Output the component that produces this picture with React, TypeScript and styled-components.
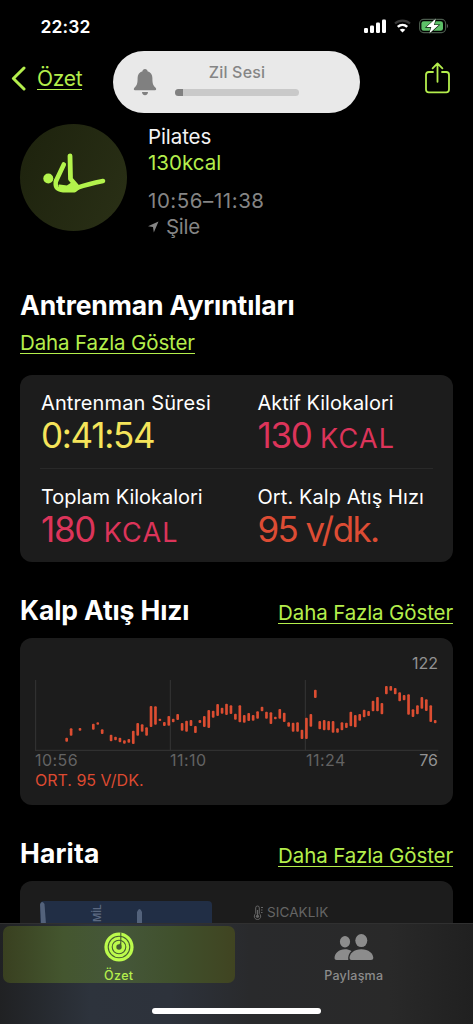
import React from "react";
import styled, { createGlobalStyle } from "styled-components";

const LIME = "#b4ee4c";
const RED = "#dc345a";
const CARD = "#1c1c1c";

const Global = createGlobalStyle`
  * { box-sizing: border-box; }
  html, body { margin: 0; padding: 0; background: #000; }
  body { font-family: Inter, "Liberation Sans", sans-serif; color: #fff; }
  svg { display: block; flex: none; }
`;

const Screen = styled.div`
  position: relative;
  display: flex;
  flex-direction: column;
  width: 473px;
  height: 1024px;
  overflow: hidden;
  background: #000;
`;

const StatusBar = styled.div`
  display: flex;
  justify-content: space-between;
  align-items: center;
  height: 52px;
  padding: 0 24px 0 40.5px;
  flex: none;
`;

const Clock = styled.span`
  font-size: 17.5px;
  font-weight: 600;
  letter-spacing: 0.1px;
`;

const StatusIcons = styled.div`
  display: flex;
  align-items: center;
  gap: 8px;
`;

const NavBar = styled.nav`
  display: flex;
  justify-content: space-between;
  align-items: center;
  height: 52px;
  padding: 0 23px 0 11px;
  flex: none;
`;

const BackLink = styled.a`
  display: flex;
  align-items: center;
  gap: 11px;
  color: ${LIME};
`;

const Underlined = styled.span<{ $size?: number; $track?: number }>`
  display: inline-block;
  font-size: ${(p) => p.$size ?? 20.5}px;
  line-height: 24px;
  height: 23px;
  letter-spacing: ${(p) => p.$track ?? -0.12}px;
  color: ${LIME};
  border-bottom: 1.3px solid ${LIME};
  white-space: nowrap;
`;

const VolumeHud = styled.div`
  position: absolute;
  top: 51px;
  left: 113px;
  width: 247px;
  height: 62px;
  border-radius: 31px;
  background: #e9e9e9;
  display: flex;
  padding: 18px 0 0 20px;
  gap: 18px;
`;

const HudBody = styled.div`
  display: flex;
  flex-direction: column;
  align-items: center;
  width: 124px;
  margin-top: -6px;
`;

const HudTitle = styled.span`
  font-size: 16px;
  font-weight: 500;
  line-height: 18px;
  color: #858585;
  letter-spacing: 0.2px;
`;

const HudTrack = styled.div`
  width: 124px;
  height: 7px;
  margin-top: 8px;
  border-radius: 4px;
  background: #c9c9c9;
  overflow: hidden;
`;

const HudLevel = styled.div`
  width: 8px;
  height: 7px;
  background: #818181;
`;

const Content = styled.main`
  flex: 1;
  min-height: 0;
  overflow: hidden;
  padding: 0 20px;
`;

const Summary = styled.section`
  display: flex;
  gap: 21px;
  padding-top: 20px;
  height: 177px;
`;

const Badge = styled.div`
  width: 107px;
  height: 107px;
  border-radius: 50%;
  background: linear-gradient(115deg, #1d220d, #2a3016);
`;

const SummaryText = styled.div`
  display: flex;
  flex-direction: column;
`;

const SummaryLine = styled.div<{ $color: string; $gap?: number; $track?: number }>`
  display: flex;
  align-items: center;
  font-size: 20.5px;
  line-height: 26px;
  height: 26px;
  margin-top: ${(p) => p.$gap ?? 0}px;
  color: ${(p) => p.$color};
  letter-spacing: ${(p) => p.$track ?? -0.3}px;
`;

const Heading = styled.h2<{ $track?: number }>`
  margin: 0;
  font-size: 26.5px;
  font-weight: 700;
  line-height: 32px;
  letter-spacing: ${(p) => p.$track ?? -0.12}px;
  white-space: nowrap;
`;

const DetailsHead = styled.header`
  display: flex;
  flex-direction: column;
  align-items: flex-start;
  gap: 10px;
  height: 94px;
  padding-top: 7.5px;
`;

const SectionHead = styled.header`
  display: flex;
  justify-content: space-between;
  align-items: flex-start;
  height: 76px;
  padding-top: 31.5px;
`;

const HeadLink = styled.div`
  padding-top: 7.5px;
`;

const Card = styled.section<{ $height: number }>`
  height: ${(p) => p.$height}px;
  border-radius: 12px;
  background: ${CARD};
`;

const MetricsCard = styled(Card)`
  padding: 0 20px;
`;

const MetricRow = styled.div<{ $divided?: boolean }>`
  display: grid;
  grid-template-columns: 216.5px 1fr;
  height: 94px;
  padding: 15px 0 0 1px;
  border-bottom: ${(p) => (p.$divided ? "1px solid #292929" : "0")};
`;

const MetricLabel = styled.div<{ $track: number }>`
  font-size: 20px;
  line-height: 26px;
  letter-spacing: ${(p) => p.$track}px;
  white-space: nowrap;
`;

const MetricValue = styled.div<{ $color: string; $track: number }>`
  font-size: 35px;
  font-weight: 400;
  line-height: 38px;
  color: ${(p) => p.$color};
  letter-spacing: ${(p) => p.$track}px;
  white-space: nowrap;
`;

const Unit = styled.span`
  font-size: 27px;
  letter-spacing: 1.2px;
`;

const HeartCard = styled(Card)`
  padding: 15px 15px 0;
`;

const ChartMax = styled.div`
  height: 27px;
  font-size: 16px;
  line-height: 21px;
  text-align: right;
  color: #929292;
`;

const Axis = styled.div`
  display: grid;
  grid-template-columns: 135px 136px 1fr auto;
  height: 19px;
  font-size: 16px;
  line-height: 18px;
  letter-spacing: 0.45px;
  color: #636363;
`;

const AxisMin = styled.span`
  color: #929292;
  letter-spacing: 0;
`;

const Average = styled.div`
  font-size: 16px;
  line-height: 21px;
  color: #dd4a31;
`;

const MapCard = styled(Card)`
  display: flex;
  gap: 41px;
  padding: 20px 20px 0;
`;

const MapPreview = styled.div`
  width: 172px;
  height: 90px;
  border-radius: 4px;
  background: #212e45;
  overflow: hidden;
`;

const Weather = styled.div`
  display: flex;
  gap: 3px;
  height: 22px;
  align-items: center;
  font-size: 13.5px;
  letter-spacing: 0.1px;
  color: #656565;
`;

const TabBar = styled.footer`
  position: relative;
  flex: none;
  display: flex;
  height: 101px;
  padding: 2px 0 0 3px;
  border-top: 1px solid #303030;
  background: linear-gradient(90deg, #202123 0, #2d333c 90px, #2d323b 170px, #292a2c 250px, #292929 390px, #202020 473px);
`;

const Tab = styled.div<{ $active?: boolean }>`
  display: flex;
  flex-direction: column;
  align-items: center;
  width: ${(p) => (p.$active ? 232 : 239)}px;
  height: 57px;
  border-radius: 7px;
  color: ${(p) => (p.$active ? LIME : "#8c8c8c")};
  background: ${(p) =>
    p.$active ? "linear-gradient(90deg, #394020, #44562f 26%, #45573a 50%, #40502c 75%, #404421)" : "none"};
`;

const TabIcon = styled.div`
  display: flex;
  flex: none;
  align-items: flex-end;
  height: 36px;
  margin-bottom: 6px;
`;

const TabLabel = styled.span<{ $track: number }>`
  font-size: 12.5px;
  font-weight: 500;
  line-height: 15px;
  letter-spacing: ${(p) => p.$track}px;
`;

const HomeIndicator = styled.div`
  position: absolute;
  left: 152px;
  top: 84px;
  width: 169px;
  height: 6px;
  border-radius: 3px;
  background: #fff;
`;

/* One entry per interval: slot, top and bottom of the pulse range. */
const PULSE: [number, number, number][] = [
  [0, 173, 185], [1, 145, 167], [3, 144, 152], [6, 131, 149], [7, 127, 134], [8, 148, 162],
  [10, 164, 184], [11, 170, 181], [12, 173, 187], [13, 181, 191], [14, 177, 188], [15, 152, 192],
  [16, 129, 167], [17, 133, 155], [18, 142, 167], [19, 78, 141], [20, 79, 134], [21, 116, 123],
  [22, 126, 138], [23, 108, 137], [24, 116, 127], [25, 102, 120], [26, 129, 152], [27, 122, 155],
  [28, 120, 138], [29, 138, 159], [30, 120, 129], [31, 108, 141], [32, 90, 144], [33, 92, 113],
  [34, 72, 108], [35, 83, 101], [36, 71, 105], [37, 76, 102], [38, 101, 119], [39, 76, 127],
  [40, 105, 128], [41, 99, 123], [42, 105, 122], [43, 94, 116], [44, 80, 94], [45, 95, 116],
  [46, 97, 132], [47, 110, 118], [48, 87, 116], [49, 98, 126], [50, 127, 140], [51, 128, 155],
  [52, 127, 155], [53, 149, 177], [54, 113, 177], [55, 102, 140], [56, 29, 54], [57, 123, 148],
  [58, 120, 151], [59, 123, 151], [60, 123, 158], [61, 145, 158], [62, 127, 151], [63, 128, 144],
  [64, 95, 139], [65, 105, 142], [66, 102, 122], [67, 89, 112], [68, 93, 108], [69, 62, 94],
  [70, 51, 94], [71, 69, 103], [72, 18, 43], [73, 18, 32], [74, 24, 43], [75, 37, 64],
  [76, 45, 61], [77, 43, 104], [78, 88, 111], [79, 76, 103], [80, 51, 86], [81, 58, 93],
  [82, 76, 126], [83, 120, 130],
];

const PulseChart = () => (
  <svg width="405" height="71" viewBox="0 0 1215 213">
    <g stroke="#353535" strokeWidth="3">
      <path d="M2 0V211M406 0V211M811 0V211" />
      <path d="M0 211H1210" />
    </g>
    {PULSE.map(([slot, top, bottom]) => (
      <rect key={slot} x={91 + slot * 13.32} y={top} width="8" height={bottom - top} rx="3" fill="#dc4d31" />
    ))}
  </svg>
);

const SignalIcon = () => (
  <svg width="22" height="14" viewBox="0 0 22 14" fill="#fff">
    <rect x="0" y="9" width="4" height="5" rx="1.2" />
    <rect x="6" y="6.5" width="4" height="7.5" rx="1.2" />
    <rect x="12" y="3.5" width="4" height="10.5" rx="1.2" />
    <rect x="18" y="0.5" width="4" height="13.5" rx="1.2" />
  </svg>
);

const WifiIcon = () => (
  <svg width="17" height="14" viewBox="0 0 17 14" fill="none">
    <path d="M1 4.5C5.2 .6 11.8 .6 16 4.5" stroke="#383838" strokeWidth="2.2" />
    <path d="M3.8 7.9C6.5 5.3 10.5 5.3 13.2 7.9" stroke="#fff" strokeWidth="2.5" />
    <path d="M8.5 13.6 5.7 10.8C7.2 9.3 9.8 9.3 11.3 10.8Z" fill="#fff" />
  </svg>
);

const BatteryIcon = () => (
  <svg width="30" height="16" viewBox="0 0 30 16">
    <rect x=".6" y="1.4" width="26" height="13.2" rx="4" fill="none" stroke="#4b5b4d" strokeWidth="1.1" />
    <rect x="2.4" y="3.2" width="21.6" height="9.6" rx="2.3" fill="#5dc168" />
    <path d="M27.9 5.7v4.5c1.4-.8 1.4-3.7 0-4.5Z" fill="#666" />
    <path d="M16.8 .6 7.4 9.1H12.3L10.3 15.6 19.8 7H15Z" fill="#fff" stroke="#0b1a0d" strokeWidth="1.2" paintOrder="stroke" />
  </svg>
);

const BackIcon = () => (
  <svg width="15" height="25" viewBox="0 0 15 25">
    <path d="M13 2 2.4 12.5 13 23" fill="none" stroke={LIME} strokeWidth="3" strokeLinecap="round" strokeLinejoin="round" />
  </svg>
);

const ShareIcon = () => (
  <svg width="25" height="32" viewBox="0 0 25 32" fill="none" stroke={LIME} strokeWidth="1.8" strokeLinecap="round" strokeLinejoin="round">
    <path d="M8 10H3.8Q1 10 1 12.8V27.5Q1 30.3 3.8 30.3H21.2Q24 30.3 24 27.5V12.8Q24 10 21.2 10H17M12.5 19.8V1.6M7.6 6.4 12.5 1.4 17.4 6.4" />
  </svg>
);

const BellIcon = () => (
  <svg width="24" height="27" viewBox="0 0 24 27" fill="#808080">
    <path d="M12 0C10.5 0 9.5 1 9.5 2.2C6.2 3.2 4.6 5.6 4.6 9C4.6 14.5 4 16.3 1.6 18.5C.3 19.8 .7 21.3 2 21.3H22C23.3 21.3 23.7 19.8 22.4 18.5C20 16.3 19.4 14.5 19.4 9C19.4 5.6 17.8 3.2 14.5 2.2C14.5 1 13.5 0 12 0Z" />
    <path d="M9 23H15C15 25 13.8 26.2 12 26.2S9 25 9 23Z" />
  </svg>
);

const PilatesIcon = () => (
  <svg width="107" height="107" viewBox="0 0 107 107" fill="none" stroke="#b3f34c" strokeLinecap="round" strokeLinejoin="round">
    <circle cx="28.3" cy="54.5" r="5" fill="#b3f34c" stroke="none" />
    <path d="M43.8 40.5 36 57" strokeWidth="4.6" />
    <path d="M50 31.8 50.5 55 57 62.5" strokeWidth="4.8" />
    <path d="M36 57C34.6 63 37 66 43 66.2H54.5L58 63.5" strokeWidth="4.4" />
    <path d="M39.5 61.5 47 62.5 51.5 59.5 57 63 54 66.5H41Z" fill="#b3f34c" strokeWidth="2" />
    <path d="M57.5 63.7Q68 60 83 57" strokeWidth="4.6" />
  </svg>
);

const LocationIcon = () => (
  <svg width="18" height="12" viewBox="0 0 18 12">
    <path d="M10.5 .5 0 5.3 5 6 5.8 11.5Z" fill="#858585" />
  </svg>
);

const ThermometerIcon = () => (
  <svg width="11" height="15" viewBox="0 0 11 15" fill="none" stroke="#656565">
    <path d="M2.7 8.7V2.8A1.8 1.8 0 0 1 6.3 2.8V8.7A3.2 3.2 0 1 1 2.7 8.7Z" />
    <path d="M4.5 5V11" strokeWidth="1.3" />
    <circle cx="4.5" cy="11.3" r="1.6" fill="#656565" stroke="none" />
    <path d="M8 2.5H10M8 5H9.5M8 7.5H9.5" />
  </svg>
);

const MapArt = () => (
  <svg width="172" height="30" viewBox="0 0 172 30">
    <path d="M0 3Q2-1 4.5 3L6.5 30H1.5Z" fill="#53627b" />
    <path d="M97 11Q99.5 5 102 11V30H97Z" fill="#53627b" />
    <text transform="translate(61 21) rotate(-90)" fontSize="10" fontWeight="600" fill="#5b6880">MİL</text>
  </svg>
);

const RingsIcon = () => (
  <svg width="30" height="30" viewBox="0 0 30 30" fill="none">
    <circle cx="15" cy="15" r="14.6" fill="#bcfb4c" />
    <g stroke="#465d32" strokeWidth="1.1">
      <circle cx="15" cy="15" r="10.8" />
      <circle cx="15" cy="15" r="6.8" />
      <path d="M16.8 .5V14" />
    </g>
    <circle cx="15" cy="15" r="2.7" fill="#465d32" />
    <path d="M15 12.3 17 10.5V14Z" fill="#465d32" />
  </svg>
);

const PeopleIcon = () => (
  <svg width="40" height="28" viewBox="0 0 40 28" fill="#8c8c8c">
    <ellipse cx="11" cy="7.8" rx="5.1" ry="5.7" />
    <path d="M17.5 17C15.5 15.7 13.5 15.2 11 15.2C4.8 15.2 .5 19.5 .5 24.2Q.5 26 2.5 26H14.3C13.7 22.5 15 19 17.5 17Z" />
    <ellipse cx="27.3" cy="6.6" rx="6" ry="6.5" />
    <path d="M27.3 15.2C20 15.2 15.5 19.5 15.5 24Q15.5 26 17.5 26H37Q39.3 26 39.3 24C39.3 19.5 34.6 15.2 27.3 15.2Z" />
  </svg>
);

export default function App() {
  return (
    <Screen>
      <Global />
      <StatusBar>
        <Clock>22:32</Clock>
        <StatusIcons>
          <SignalIcon />
          <WifiIcon />
          <BatteryIcon />
        </StatusIcons>
      </StatusBar>
      <NavBar>
        <BackLink>
          <BackIcon />
          <Underlined $size={21} $track={-0.3}>Özet</Underlined>
        </BackLink>
        <ShareIcon />
      </NavBar>
      <VolumeHud>
        <BellIcon />
        <HudBody>
          <HudTitle>Zil Sesi</HudTitle>
          <HudTrack><HudLevel /></HudTrack>
        </HudBody>
      </VolumeHud>

      <Content>
        <Summary>
          <Badge><PilatesIcon /></Badge>
          <SummaryText>
            <SummaryLine $color="#f4f4f4" $track={-0.1}>Pilates</SummaryLine>
            <SummaryLine $color={LIME} $track={0}>130kcal</SummaryLine>
            <SummaryLine $color="#858585" $gap={12} $track={0.55}>10:56–11:38</SummaryLine>
            <SummaryLine $color="#858585"><LocationIcon />Şile</SummaryLine>
          </SummaryText>
        </Summary>

        <DetailsHead>
          <Heading>Antrenman Ayrıntıları</Heading>
          <Underlined>Daha Fazla Göster</Underlined>
        </DetailsHead>
        <MetricsCard $height={187}>
          <MetricRow $divided>
            <div>
              <MetricLabel $track={0.12}>Antrenman Süresi</MetricLabel>
              <MetricValue $color="#f5e45a" $track={-1.3}>0:41:54</MetricValue>
            </div>
            <div>
              <MetricLabel $track={-0.02}>Aktif Kilokalori</MetricLabel>
              <MetricValue $color={RED} $track={-1.3}>130 <Unit>KCAL</Unit></MetricValue>
            </div>
          </MetricRow>
          <MetricRow>
            <div>
              <MetricLabel $track={-0.02}>Toplam Kilokalori</MetricLabel>
              <MetricValue $color={RED} $track={-1.3}>180 <Unit>KCAL</Unit></MetricValue>
            </div>
            <div>
              <MetricLabel $track={0.08}>Ort. Kalp Atış Hızı</MetricLabel>
              <MetricValue $color="#dd4c34" $track={-1.6}>95 v/dk.</MetricValue>
            </div>
          </MetricRow>
        </MetricsCard>

        <SectionHead>
          <Heading>Kalp Atış Hızı</Heading>
          <HeadLink><Underlined>Daha Fazla Göster</Underlined></HeadLink>
        </SectionHead>
        <HeartCard $height={167}>
          <ChartMax>122</ChartMax>
          <PulseChart />
          <Axis>
            <span>10:56</span>
            <span>11:10</span>
            <span>11:24</span>
            <AxisMin>76</AxisMin>
          </Axis>
          <Average>ORT. 95 V/DK.</Average>
        </HeartCard>

        <SectionHead>
          <Heading $track={0.15}>Harita</Heading>
          <HeadLink><Underlined>Daha Fazla Göster</Underlined></HeadLink>
        </SectionHead>
        <MapCard $height={200}>
          <MapPreview><MapArt /></MapPreview>
          <Weather><ThermometerIcon />SICAKLIK</Weather>
        </MapCard>
      </Content>

      <TabBar>
        <Tab $active>
          <TabIcon><RingsIcon /></TabIcon>
          <TabLabel $track={0.4}>Özet</TabLabel>
        </Tab>
        <Tab>
          <TabIcon><PeopleIcon /></TabIcon>
          <TabLabel $track={0.2}>Paylaşma</TabLabel>
        </Tab>
        <HomeIndicator />
      </TabBar>
    </Screen>
  );
}
